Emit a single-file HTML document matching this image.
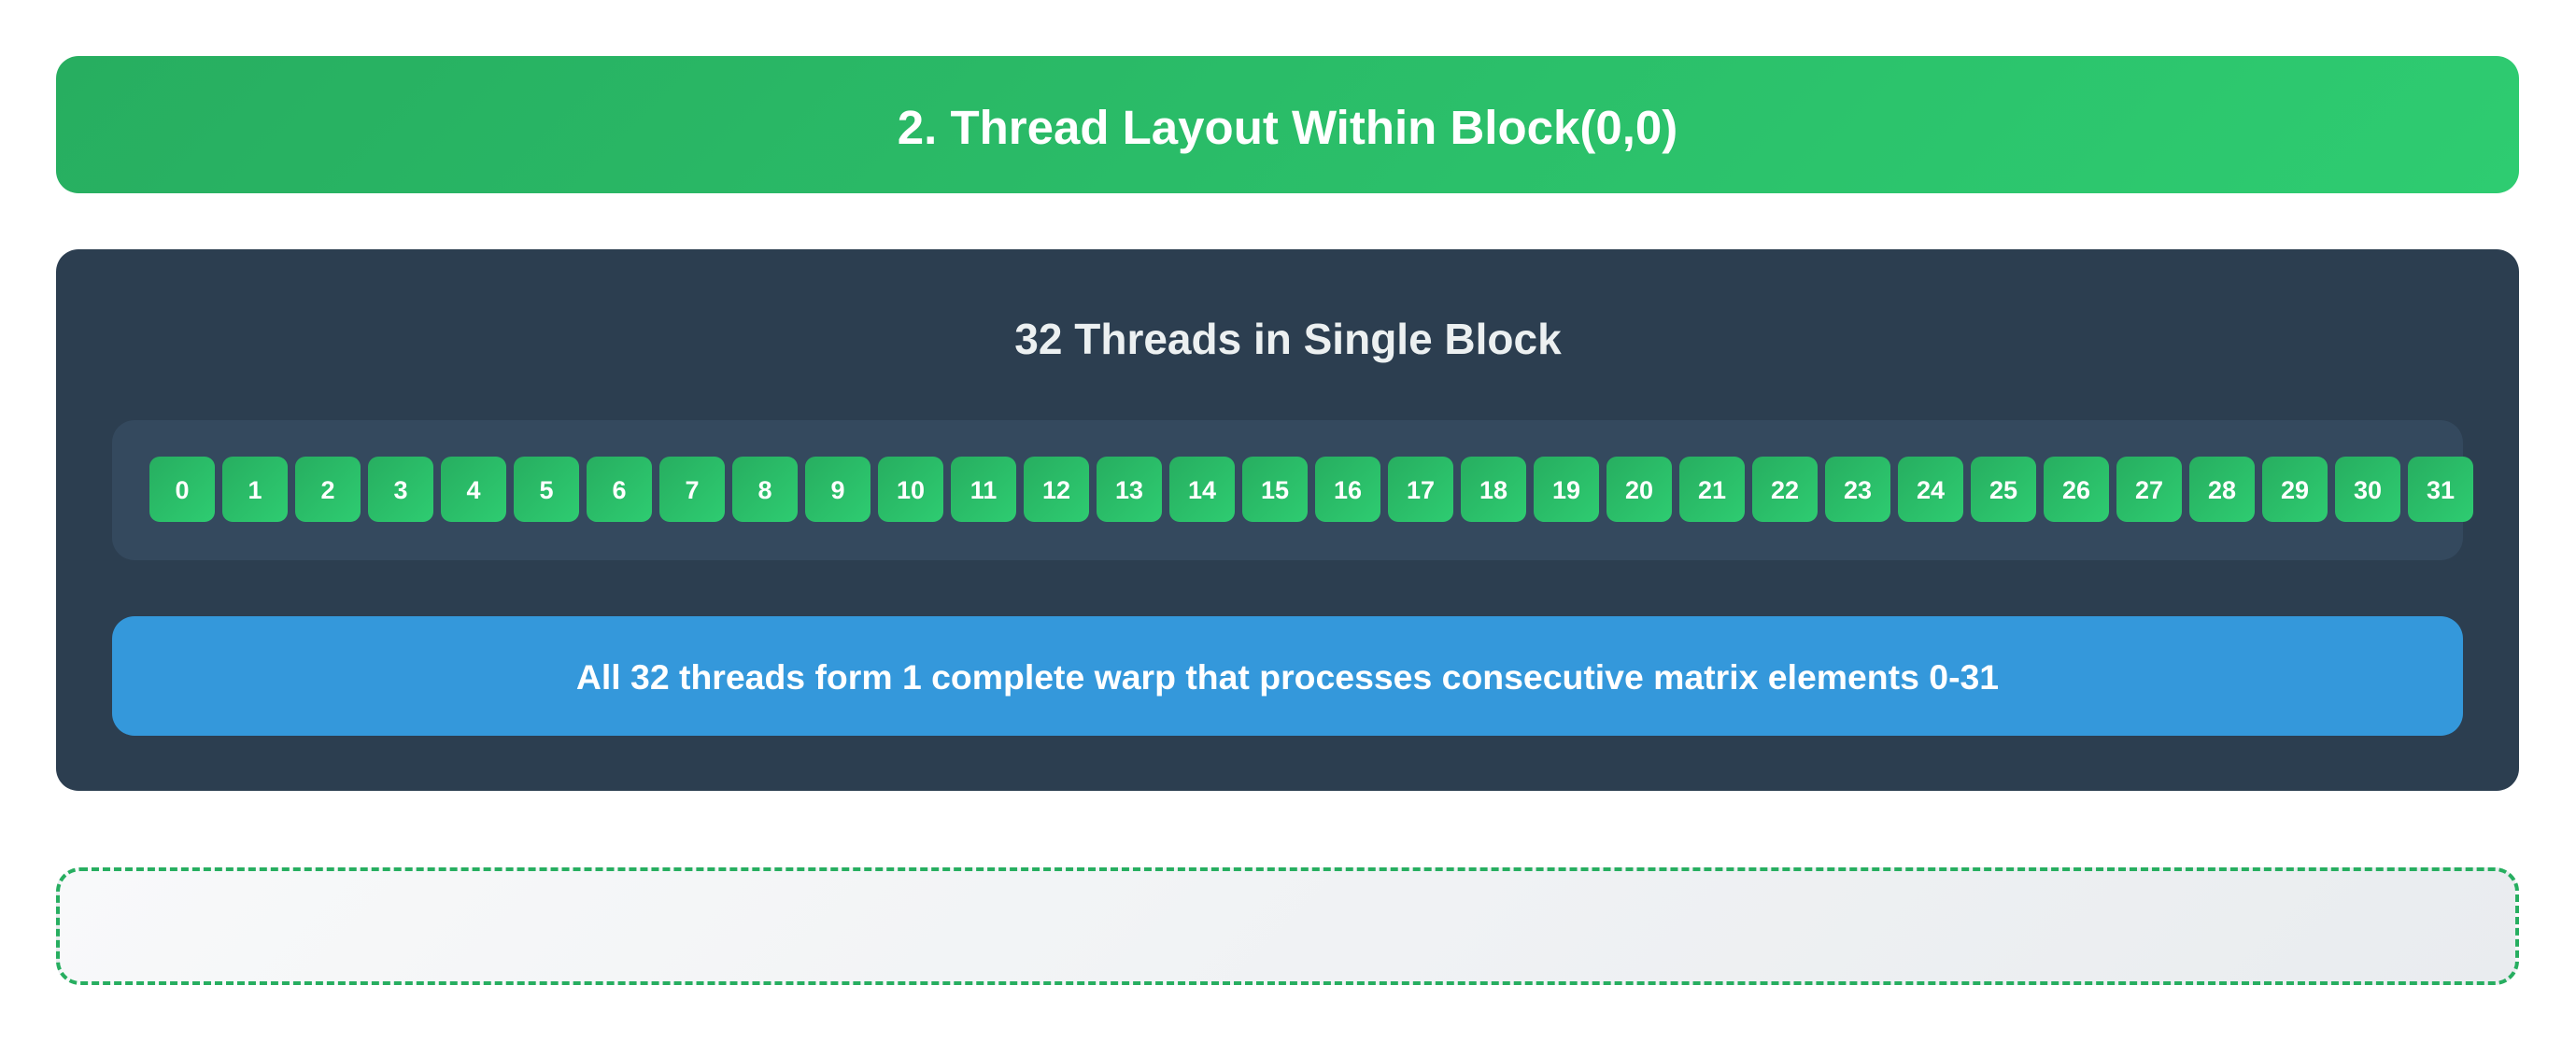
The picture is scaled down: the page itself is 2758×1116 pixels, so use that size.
<!DOCTYPE html>
<html><head><meta charset="utf-8"><style>
*{margin:0;padding:0;box-sizing:border-box}
html,body{width:2758px;height:1116px;background:#fff;overflow:hidden;font-family:"Liberation Sans",sans-serif;font-weight:bold}
.hdr{position:absolute;left:60px;top:60px;width:2637px;height:147px;border-radius:24px;background:linear-gradient(135deg,#27ae60,#2ecc71);color:#fff;font-size:51px;text-align:center;line-height:153px}
.dark{position:absolute;left:60px;top:267px;width:2637px;height:580px;border-radius:24px;background:#2c3e50}
.sub{position:absolute;left:0;right:0;top:331px;text-align:center;color:#ecf0f1;font-size:46px;line-height:64px}
.strip{position:absolute;left:120px;top:450px;width:2517px;height:150px;border-radius:24px;background:#34495e}
.cell{position:absolute;top:489px;width:70px;height:70px;border-radius:11px;background:linear-gradient(135deg,#27ae60,#2ecc71);color:#fff;font-size:27px;text-align:center;line-height:72px}
.blue{position:absolute;left:120px;top:660px;width:2517px;height:128px;border-radius:24px;background:#3498db;color:#fff;font-size:37.4px;text-align:center;line-height:130px}
.dash{position:absolute;left:60px;top:929px;width:2637px;height:126px;border-radius:26px;border:4px dashed #27ae60;background:linear-gradient(135deg,#f8f9fa,#e9ecef)}
</style></head><body>
<div class="hdr">2. Thread Layout Within Block(0,0)</div>
<div class="dark"></div>
<div class="sub">32 Threads in Single Block</div>
<div class="strip"></div>
<div class="cell" style="left:160px">0</div><div class="cell" style="left:238px">1</div><div class="cell" style="left:316px">2</div><div class="cell" style="left:394px">3</div><div class="cell" style="left:472px">4</div><div class="cell" style="left:550px">5</div><div class="cell" style="left:628px">6</div><div class="cell" style="left:706px">7</div><div class="cell" style="left:784px">8</div><div class="cell" style="left:862px">9</div><div class="cell" style="left:940px">10</div><div class="cell" style="left:1018px">11</div><div class="cell" style="left:1096px">12</div><div class="cell" style="left:1174px">13</div><div class="cell" style="left:1252px">14</div><div class="cell" style="left:1330px">15</div><div class="cell" style="left:1408px">16</div><div class="cell" style="left:1486px">17</div><div class="cell" style="left:1564px">18</div><div class="cell" style="left:1642px">19</div><div class="cell" style="left:1720px">20</div><div class="cell" style="left:1798px">21</div><div class="cell" style="left:1876px">22</div><div class="cell" style="left:1954px">23</div><div class="cell" style="left:2032px">24</div><div class="cell" style="left:2110px">25</div><div class="cell" style="left:2188px">26</div><div class="cell" style="left:2266px">27</div><div class="cell" style="left:2344px">28</div><div class="cell" style="left:2422px">29</div><div class="cell" style="left:2500px">30</div><div class="cell" style="left:2578px">31</div>
<div class="blue">All 32 threads form 1 complete warp that processes consecutive matrix elements 0-31</div>
<div class="dash"></div>
</body></html>
